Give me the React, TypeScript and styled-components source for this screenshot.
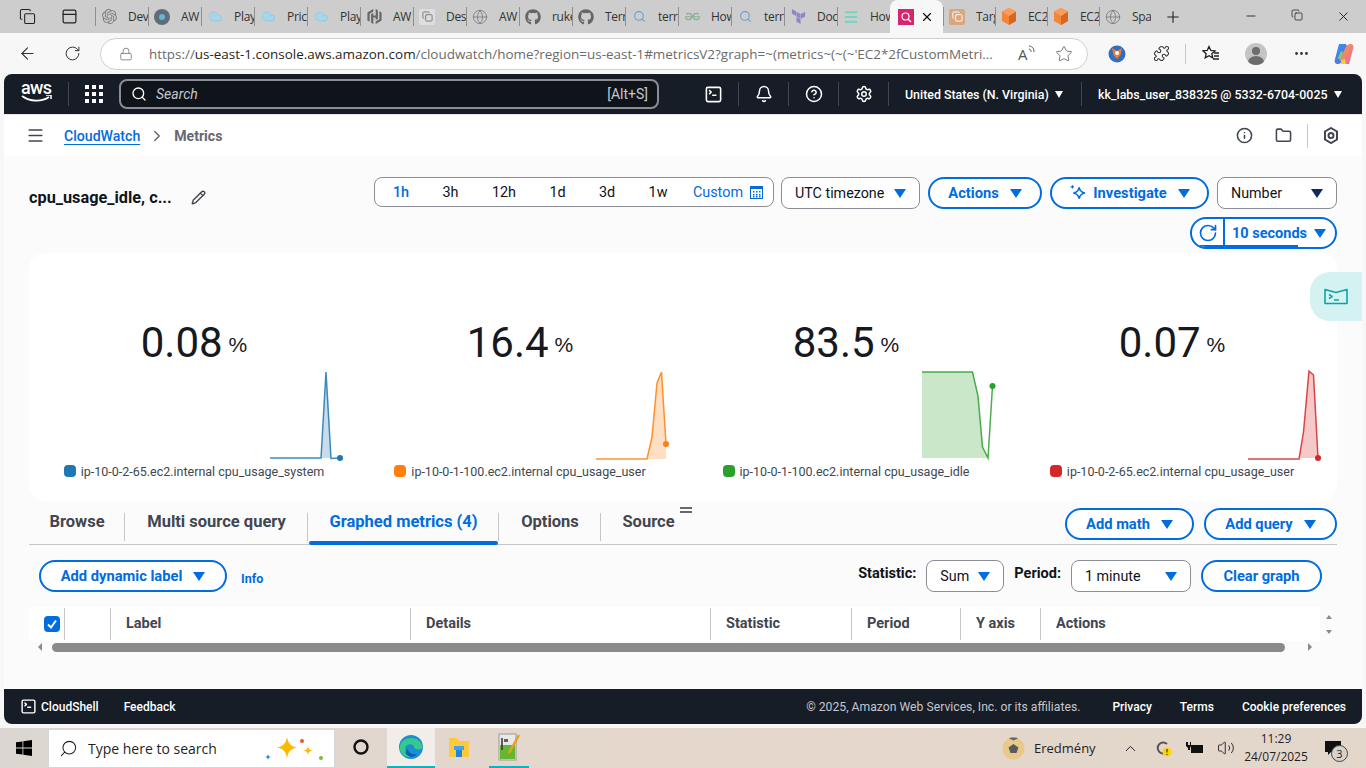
import React from "react";
import styled, { createGlobalStyle } from "styled-components";
import {
  ArrowLeft, Bell, ChevronRight, ChevronUp, CircleHelp, Cloud, Copy, Folder, Globe, Info, Lock, Menu, Minus,
  MoreHorizontal, PanelTop, Pencil, Plus, Puzzle, RotateCw, Search, Settings, SquareTerminal, Star, Volume2, X,
} from "lucide-react";
import { FaGithub } from "react-icons/fa";
import { SiGeeksforgeeks, SiHashicorp, SiOpenai, SiTerraform } from "react-icons/si";

const BLUE = "#006ce0";

const GlobalStyle = createGlobalStyle`
  html, body { margin: 0; padding: 0; background: #f7f7f7; }
  * { box-sizing: border-box; }
  body { font-family: Roboto, "Open Sans", sans-serif; color: #0f141a; }
`;

const Screen = styled.div`
  width: 1366px;
  height: 768px;
  overflow: hidden;
  position: relative;
  display: flex;
  flex-direction: column;
  background: #f7f7f7;
`;

/* browser chrome */
const TabStrip = styled.div`
  height: 33px;
  background: #cdcdcd;
  display: flex;
  align-items: center;
  padding-left: 6px;
  font-family: "Open Sans", sans-serif;
`;
const StripTool = styled.div`
  width: 42px;
  flex: none;
  display: flex;
  justify-content: center;
  color: #222;
`;
const StripGap = styled.div`
  width: 5px;
  flex: none;
`;
const BrowserTab = styled.div<{ $active?: boolean; $narrow?: boolean }>`
  width: ${(p) => (p.$narrow ? 52 : 53)}px;
  height: 33px;
  flex: none;
  display: flex;
  align-items: center;
  gap: ${(p) => (p.$active ? 6 : 11)}px;
  padding-left: ${(p) => (p.$active ? 8 : 6)}px;
  font-size: 12px;
  letter-spacing: -0.3px;
  white-space: nowrap;
  overflow: hidden;
  color: #333;
  position: relative;
  background: ${(p) => (p.$active ? "#f7f7f7" : "transparent")};
  border-radius: ${(p) => (p.$active ? "8px 8px 0 0" : "0")};
  &::before {
    content: "";
    position: absolute;
    left: 0;
    top: 7px;
    bottom: 7px;
    width: 1px;
    background: ${(p) => (p.$active ? "transparent" : "#8f8f8f")};
  }
`;
const TabIconSlot = styled.span<{ $color?: string; $bg?: string }>`
  flex: none;
  width: 16px;
  height: 16px;
  display: flex;
  align-items: center;
  justify-content: center;
  border-radius: 2px;
  color: ${(p) => p.$color || "#7d7d7d"};
  background: ${(p) => p.$bg || "transparent"};
`;
const NewTab = styled.div`
  margin-left: 13px;
  color: #222;
  display: flex;
`;
const WindowButtons = styled.div`
  margin-left: auto;
  display: flex;
  color: #222;
`;
const WindowButton = styled.div`
  width: 46px;
  display: flex;
  justify-content: center;
`;
const AddressRow = styled.div`
  height: 41px;
  display: flex;
  align-items: center;
  padding-left: 17px;
  color: #333;
`;
const RoundTool = styled.div<{ $w?: number }>`
  width: ${(p) => p.$w || 41}px;
  flex: none;
  display: flex;
  justify-content: center;
  align-items: center;
`;
const AddressBar = styled.div`
  width: 988px;
  height: 32px;
  flex: none;
  background: #fff;
  border: 1px solid #d0d0d0;
  border-radius: 16px;
  display: flex;
  align-items: center;
  padding: 0 14px 0 18px;
  font-family: "Open Sans", sans-serif;
  font-size: 13.45px;
  color: #6b6b6b;
`;
const Url = styled.span`
  flex: 1;
  margin-left: 16px;
  white-space: nowrap;
  overflow: hidden;
  b { font-weight: 400; color: #1f1f1f; }
`;
const ReadAloud = styled.span`
  display: flex;
  align-items: flex-start;
  width: 37px;
  font-size: 15px;
  color: #555;
`;
const BarSep = styled.div`
  width: 1px;
  height: 20px;
  flex: none;
  background: #c8c8c8;
`;
const Avatar = styled.div`
  width: 22px;
  height: 22px;
  border-radius: 50%;
  background: #c4c4c4;
  position: relative;
  overflow: hidden;
  &::before {
    content: "";
    position: absolute;
    left: 7px;
    top: 4px;
    width: 8px;
    height: 8px;
    border-radius: 50%;
    background: #6d6d6d;
  }
  &::after {
    content: "";
    position: absolute;
    left: 3px;
    top: 13px;
    width: 16px;
    height: 12px;
    border-radius: 50%;
    background: #6d6d6d;
  }
`;

/* console frame */
const Console = styled.div`
  margin: 0 4px;
  height: 650px;
  flex: none;
  background: #fff;
  border-radius: 8px;
  overflow: hidden;
  display: flex;
  flex-direction: column;
`;
const TopNav = styled.div`
  height: 40px;
  flex: none;
  background: #161d26;
  display: flex;
  align-items: center;
  color: #fff;
  font-size: 12.4px;
  font-weight: 500;
`;
const AwsMark = styled.div`
  width: 64px;
  flex: none;
  padding-left: 17px;
  display: flex;
  flex-direction: column;
  align-items: flex-start;
  line-height: 14px;
  font-size: 18px;
  letter-spacing: -0.6px;
  font-weight: 500;
  height: 27px;
`;
const NavDivider = styled.div`
  width: 1px;
  height: 24px;
  flex: none;
  background: #424650;
`;
const NavSearch = styled.div`
  width: 540px;
  height: 30px;
  flex: none;
  border: 2px solid #8c8c94;
  border-radius: 8px;
  background: #0f141a;
  display: flex;
  align-items: center;
  padding: 0 9px 0 10px;
  color: #c6c6cd;
  font-size: 14px;
  font-weight: 400;
`;
const SearchText = styled.span`
  margin-left: 9px;
  flex: 1;
  font-style: italic;
`;
const NavIcon = styled.div`
  width: 49px;
  flex: none;
  display: flex;
  justify-content: center;
  align-items: center;
`;
const NavMenu = styled.div<{ $w: number }>`
  width: ${(p) => p.$w}px;
  flex: none;
  padding-left: 16px;
  display: flex;
  align-items: center;
  gap: 5px;
  white-space: nowrap;
`;
const NavCaret = styled.span`
  width: 0;
  height: 0;
  margin-left: 1px;
  border-left: 4px solid transparent;
  border-right: 4px solid transparent;
  border-top: 7px solid #fff;
`;

const SubNav = styled.div`
  height: 42px;
  flex: none;
  display: flex;
  align-items: center;
  padding-left: 22px;
  border-top: 1px solid #e8e8e8;
  background: #fff;
  font-size: 14.1px;
`;
const Crumb = styled.a`
  margin-left: 19px;
  color: ${BLUE};
  font-weight: 500;
  text-decoration: underline;
  text-underline-offset: 3px;
`;
const CrumbCurrent = styled.span`
  color: #656871;
  font-weight: 700;
`;
const CrumbChevron = styled.span`
  display: flex;
  margin: 0 8px;
  color: #656871;
`;
const SubTools = styled.div`
  margin-left: auto;
  padding-right: 8px;
  display: flex;
  align-items: center;
  color: #424650;
`;
const SubTool = styled.div<{ $wide?: boolean }>`
  width: ${(p) => (p.$wide ? 46 : 39)}px;
  display: flex;
  justify-content: center;
`;
const SubDivider = styled(NavDivider)`
  margin-left: 4px;
  background: #c6c6cd;
`;

const Page = styled.div`
  flex: 1;
  background: #fbfbfb;
  display: flex;
  flex-direction: column;
  padding: 21px 25px 0;
  min-height: 0;
`;
const Toolbar = styled.div`
  display: flex;
  align-items: flex-start;
  height: 32px;
`;
const Title = styled.div`
  width: 345px;
  height: 32px;
  display: flex;
  align-items: center;
  padding-top: 8px;
  font-size: 16.3px;
  font-weight: 700;
  gap: 19px;
  color: #0f141a;
`;
const RangeGroup = styled.div`
  width: 400px;
  height: 30px;
  border: 1px solid #8c8c94;
  border-radius: 8px;
  background: #fff;
  display: flex;
  align-items: center;
  font-size: 14.4px;
  padding-right: 10px;
  margin-right: 7px;
`;
const RangeItem = styled.span<{ $active?: boolean; $w: number }>`
  width: ${(p) => p.$w}px;
  text-align: center;
  color: ${(p) => (p.$active ? BLUE : "#0f141a")};
  font-weight: ${(p) => (p.$active ? 500 : 400)};
`;
const CustomRange = styled.span`
  margin-left: auto;
  display: flex;
  align-items: center;
  gap: 7px;
  color: ${BLUE};
`;
const Pill = styled.div<{ $w?: number }>`
  width: ${(p) => (p.$w ? `${p.$w}px` : "auto")};
  height: 32px;
  flex: none;
  border: 2px solid ${BLUE};
  border-radius: 16px;
  background: #fff;
  color: ${BLUE};
  font-size: 14.7px;
  font-weight: 700;
  display: flex;
  align-items: center;
  justify-content: center;
  gap: 11px;
  white-space: nowrap;
`;
const Select = styled.div<{ $w: number }>`
  width: ${(p) => p.$w}px;
  height: 32px;
  flex: none;
  border: 1px solid #8c8c94;
  border-radius: 8px;
  background: #fff;
  font-size: 14.3px;
  display: flex;
  align-items: center;
  justify-content: space-between;
  padding: 0 13px;
  white-space: nowrap;
`;
const Caret = styled.span<{ $dark?: boolean }>`
  width: 0;
  height: 0;
  flex: none;
  border-left: 6px solid transparent;
  border-right: 6px solid transparent;
  border-top: 9px solid ${(p) => (p.$dark ? "#0f2a5f" : BLUE)};
`;
const PillGap = styled.div<{ $w: number }>`
  width: ${(p) => p.$w}px;
  flex: none;
`;
const RefreshRow = styled.div`
  display: flex;
  justify-content: flex-end;
  height: 32px;
  margin-top: 8px;
`;
const RefreshPill = styled.div`
  width: 147px;
  height: 32px;
  border: 2px solid ${BLUE};
  border-radius: 16px;
  background: #fff;
  display: flex;
  align-items: center;
  color: ${BLUE};
  font-size: 14.5px;
  font-weight: 700;
  overflow: hidden;
  position: relative;
  &::after {
    content: "";
    position: absolute;
    left: 0;
    bottom: 0;
    width: 106px;
    height: 2px;
    background: ${BLUE};
  }
`;
const RefreshIcon = styled.div`
  width: 33px;
  height: 100%;
  flex: none;
  border-right: 2px solid ${BLUE};
  display: flex;
  align-items: center;
  justify-content: center;
`;
const RefreshLabel = styled.div`
  flex: 1;
  padding: 0 9px 0 7px;
  display: flex;
  align-items: center;
  justify-content: space-between;
`;

const MetricsCard = styled.div`
  margin-top: 4px;
  height: 248px;
  flex: none;
  background: #fff;
  border-radius: 16px;
  display: grid;
  grid-template-columns: repeat(4, 326px);
  padding: 0 2px;
`;
const MetricColumn = styled.div`
  display: flex;
  flex-direction: column;
  align-items: center;
  padding-top: 64px;
`;
const MetricValue = styled.div`
  height: 49px;
  display: flex;
  align-items: baseline;
  gap: 6px;
  font-size: 42px;
  line-height: 51px;
  color: #16191f;
  font-weight: 400;
`;
const MetricUnit = styled.span`
  align-self: center;
  margin-top: 5px;
  font-family: "Liberation Sans", sans-serif;
  font-size: 21px;
  line-height: 1;
`;
const Spark = styled.svg`
  align-self: flex-end;
  margin-right: 11px;
  display: block;
  flex: none;
`;
const Legend = styled.div`
  height: 18px;
  display: flex;
  align-items: center;
  gap: 5px;
  font-size: 12.5px;
  color: #414750;
  white-space: nowrap;
`;
const LegendDot = styled.span<{ $color: string }>`
  width: 12px;
  height: 12px;
  border-radius: 4px;
  background: ${(p) => p.$color};
`;

const TabsBar = styled.div`
  margin-top: 6px;
  height: 38px;
  flex: none;
  display: flex;
  border-bottom: 1px solid #c6c6cd;
  position: relative;
`;
const MetricTab = styled.div<{ $active?: boolean; $w: number }>`
  width: ${(p) => p.$w}px;
  height: 37px;
  flex: none;
  display: flex;
  align-items: center;
  justify-content: center;
  padding-bottom: 8px;
  font-size: 16.5px;
  font-weight: 700;
  color: ${(p) => (p.$active ? BLUE : "#424650")};
  position: relative;
  &::before {
    content: "";
    position: absolute;
    right: 0;
    top: 6px;
    height: 28px;
    width: 1px;
    background: #c6c6cd;
  }
  &::after {
    content: "";
    display: ${(p) => (p.$active ? "block" : "none")};
    position: absolute;
    left: 1px;
    right: 1px;
    bottom: -1px;
    height: 4px;
    border-radius: 2px;
    background: ${BLUE};
  }
`;
const PlainTab = styled(MetricTab)`
  &::before { display: none; }
`;
const ResizeMark = styled.span`
  position: absolute;
  left: 651px;
  top: 0;
  width: 12px;
  height: 6px;
  border-top: 2px solid #656871;
  border-bottom: 2px solid #656871;
`;
const TabActions = styled.div`
  margin-left: auto;
  display: flex;
  gap: 10px;
  padding-top: 1px;
`;
const ControlsRow = styled.div`
  height: 62px;
  flex: none;
  display: flex;
  align-items: flex-start;
  padding: 15px 15px 0 10px;
`;
const InfoLink = styled.span`
  margin: 11px 0 0 14px;
  font-size: 12.5px;
  font-weight: 700;
  color: ${BLUE};
`;
const FieldLabel = styled.span<{ $first?: boolean }>`
  font-size: 14.5px;
  font-weight: 700;
  margin: 5px 10px 0 ${(p) => (p.$first ? "auto" : "10px")};
  color: #0f141a;
`;
const TableWrap = styled.div`
  height: 34px;
  flex: none;
  display: flex;
`;
const MetricsTable = styled.div`
  width: 1291px;
  flex: none;
  height: 34px;
  background: #fff;
  display: grid;
  grid-template-columns: 35px 46px 300px 300px 141px 109px 80px 280px;
  font-size: 14.5px;
  font-weight: 700;
  color: #424650;
`;
const HeadCell = styled.div`
  border-left: 1px solid #c6c6cd;
  margin: 1px 0;
  display: flex;
  align-items: center;
  padding: 0 0 2px 15px;
  &:first-child { border-left: 0; }
`;
const CheckBox = styled.div`
  width: 16px;
  height: 16px;
  margin-top: 2px;
  border-radius: 4px;
  background: ${BLUE};
  display: flex;
  align-items: center;
  justify-content: center;
`;
const VerticalArrows = styled.div`
  width: 18px;
  flex: none;
  display: flex;
  flex-direction: column;
  align-items: center;
  justify-content: center;
  gap: 11px;
`;
const ArrowV = styled.span<{ $up?: boolean }>`
  width: 0;
  height: 0;
  border-left: 3.5px solid transparent;
  border-right: 3.5px solid transparent;
  ${(p) => (p.$up ? "border-bottom" : "border-top")}: 4px solid #8a8a8a;
`;
const HScroll = styled.div`
  height: 14px;
  width: 1291px;
  flex: none;
  display: flex;
  align-items: center;
  padding: 0 9px;
  margin-top: -1px;
`;
const ArrowH = styled.span<{ $left?: boolean }>`
  width: 0;
  height: 0;
  flex: none;
  border-top: 4px solid transparent;
  border-bottom: 4px solid transparent;
  ${(p) => (p.$left ? "border-right" : "border-left")}: 4px solid #8a8a8a;
`;
const HThumb = styled.div`
  width: 1233px;
  height: 9px;
  margin: 0 23px 0 10px;
  border-radius: 5px;
  background: #8a8a8a;
  flex: none;
`;

const Footer = styled.div`
  height: 35px;
  margin-top: auto;
  flex: none;
  background: #161d26;
  color: #fff;
  font-size: 12px;
  font-weight: 500;
  display: flex;
  align-items: center;
  padding: 0 16px;
`;
const FooterShell = styled.span`
  display: flex;
  align-items: center;
  gap: 4px;
  margin-right: 25px;
`;
const FooterRight = styled.div`
  margin-left: auto;
  display: flex;
  gap: 28px;
`;
const Copyright = styled.span`
  color: #c6c6cd;
  font-weight: 400;
  font-size: 12.2px;
  margin-right: 4px;
`;

const ShellTab = styled.div`
  position: absolute;
  right: 4px;
  top: 272px;
  width: 52px;
  height: 49px;
  background: #d5f2f2;
  border-radius: 20px 0 0 20px;
  display: flex;
  align-items: center;
  justify-content: center;
`;

/* windows taskbar */
const Taskbar = styled.div`
  margin-top: 4px;
  height: 40px;
  flex: none;
  background: linear-gradient(90deg, #dcd6d2, #e5d7cb 45%, #e3d6cb);
  display: flex;
  align-items: center;
  font-family: "Open Sans", sans-serif;
  color: #1f1f1f;
`;
const StartButton = styled.div`
  width: 48px;
  display: flex;
  justify-content: center;
`;
const TaskSearch = styled.div`
  width: 287px;
  height: 39px;
  flex: none;
  background: #fff;
  border: 1px solid #d6d6d6;
  display: flex;
  align-items: center;
  padding-left: 10px;
  font-size: 14px;
  position: relative;
`;
const TaskSearchText = styled.span`
  margin-left: 10px;
`;
const TaskSparkles = styled.svg`
  position: absolute;
  left: 214px;
  top: 6px;
`;
const TaskApp = styled.div<{ $w: number; $active?: boolean; $marked?: boolean }>`
  width: ${(p) => p.$w}px;
  height: 40px;
  flex: none;
  display: flex;
  align-items: center;
  justify-content: center;
  background: ${(p) => (p.$active ? "#f2ede9" : "transparent")};
  border-bottom: 2px solid ${(p) => (p.$marked ? "#00b7c3" : "transparent")};
`;
const Tray = styled.div`
  margin-left: auto;
  padding-right: 11px;
  display: flex;
  align-items: center;
  height: 40px;
  font-size: 13px;
`;
const TrayItem = styled.div<{ $w: number }>`
  width: ${(p) => p.$w}px;
  flex: none;
  display: flex;
  justify-content: center;
  align-items: center;
`;
const TrayLabel = styled.span`
  width: 80px;
  flex: none;
`;
const Clock = styled.div`
  width: 70px;
  text-align: center;
  font-size: 12px;
  line-height: 18px;
`;
const Badge = styled.span`
  position: absolute;
  right: -7px;
  bottom: -6px;
  width: 17px;
  height: 17px;
  border-radius: 50%;
  border: 1px solid #444;
  background: #d8d2cc;
  font-size: 11px;
  line-height: 15px;
  text-align: center;
`;
const NoteIcon = styled.div`
  position: relative;
  display: flex;
`;

const Orange = () => (
  <svg width="16" height="17" viewBox="0 0 16 17">
    <path d="M8 0l7 3.5v9.5L8 17l-7-4V3.5z" fill="#f58536" />
    <path d="M8 8l7-4.5v9.5L8 17z" fill="#d9661f" />
    <path d="M8 0l7 3.5L8 8 1 3.5z" fill="#fa9d5a" />
  </svg>
);

const CloudIcon = () => <Cloud size={15} fill="#a6d6ea" strokeWidth={1} />;

const tabs: { label: string; icon: React.ReactNode; color?: string; bg?: string }[] = [
  { label: "Dev", icon: <SiOpenai size={15} /> },
  {
    label: "AW",
    icon: (
      <svg width="16" height="16" viewBox="0 0 16 16">
        <circle cx="8" cy="8" r="8" fill="#5f6d78" />
        <circle cx="8" cy="8" r="3" fill="#6ab3d6" />
      </svg>
    ),
  },
  { label: "Play", icon: <CloudIcon />, color: "#8cc6df" },
  { label: "Pric", icon: <CloudIcon />, color: "#8cc6df" },
  { label: "Play", icon: <CloudIcon />, color: "#8cc6df" },
  { label: "AW", icon: <SiHashicorp size={15} />, color: "#666" },
  { label: "Des", icon: <Copy size={11} />, color: "#777", bg: "#dedede" },
  { label: "AW", icon: <Globe size={16} strokeWidth={1.2} />, color: "#777" },
  { label: "ruke", icon: <FaGithub size={16} />, color: "#666" },
  { label: "Terr", icon: <FaGithub size={16} />, color: "#666" },
  { label: "terr", icon: <Search size={13} />, color: "#6a9fd8" },
  { label: "How", icon: <SiGeeksforgeeks size={15} />, color: "#86b28f" },
  { label: "terr", icon: <Search size={13} />, color: "#6a9fd8" },
  { label: "Doc", icon: <SiTerraform size={15} />, color: "#8d86c9" },
  { label: "How", icon: <Menu size={16} strokeWidth={3} />, color: "#70d6c0" },
];

const afterTabs: { label: string; icon: React.ReactNode; color?: string; bg?: string }[] = [
  { label: "Targ", icon: <Copy size={11} />, color: "#fff", bg: "#d9a77e" },
  { label: "EC2", icon: <Orange /> },
  { label: "EC2", icon: <Orange /> },
  { label: "Spa", icon: <Globe size={16} strokeWidth={1.2} />, color: "#777" },
];

type Metric = {
  value: string;
  color: string;
  legend: string;
  line: [number, number][];
  area: [number, number][];
};

const metrics: Metric[] = [
  {
    value: "0.08",
    color: "#1f77b4",
    legend: "ip-10-0-2-65.ec2.internal cpu_usage_system",
    line: [[0, 92], [51, 92], [56, 6], [61, 92.5], [70, 92]],
    area: [[51, 92], [56, 6], [61, 92]],
  },
  {
    value: "16.4",
    color: "#ff7f0e",
    legend: "ip-10-0-1-100.ec2.internal cpu_usage_user",
    line: [[0, 93], [51, 93], [56, 71], [61, 17], [65.5, 6], [70, 78]],
    area: [[51, 93], [56, 71], [61, 17], [65.5, 6], [70, 78], [70, 93]],
  },
  {
    value: "83.5",
    color: "#2ca02c",
    legend: "ip-10-0-1-100.ec2.internal cpu_usage_idle",
    line: [[0, 6], [50.5, 6], [56, 30], [60.5, 81], [66, 92], [70.5, 20]],
    area: [[0, 6], [50.5, 6], [56, 30], [60.5, 81], [66, 92], [0, 92]],
  },
  {
    value: "0.07",
    color: "#d62728",
    legend: "ip-10-0-2-65.ec2.internal cpu_usage_user",
    line: [[0, 93], [51, 93], [55.5, 66], [61, 5], [65.5, 9], [70, 92]],
    area: [[51, 92], [55.5, 66], [61, 5], [65.5, 9], [70, 92]],
  },
];

const toPoints = (pts: [number, number][]) => pts.map((p) => p.join(",")).join(" ");

const Sparkline = ({ metric }: { metric: Metric }) => {
  const last = metric.line[metric.line.length - 1];
  return (
    <Spark width="76" height="96" viewBox="0 0 76 96">
      <polygon points={toPoints(metric.area)} fill={metric.color} fillOpacity={0.25} />
      <polyline points={toPoints(metric.line)} fill="none" stroke={metric.color} strokeOpacity={0.85} strokeWidth={1.5} />
      <circle cx={last[0]} cy={last[1]} r={3} fill={metric.color} />
    </Spark>
  );
};

const ranges = [
  { label: "1h", w: 52, active: true },
  { label: "3h", w: 47 },
  { label: "12h", w: 60 },
  { label: "1d", w: 47 },
  { label: "3d", w: 52 },
  { label: "1w", w: 50 },
];

export default function App() {
  return (
    <Screen>
      <GlobalStyle />
      <TabStrip>
        <StripTool><Copy size={17} strokeWidth={1.5} /></StripTool>
        <StripTool><PanelTop size={17} strokeWidth={1.7} /></StripTool>
        <StripGap />
        {tabs.map((t, i) => (
          <BrowserTab key={i}>
            <TabIconSlot $color={t.color} $bg={t.bg}>{t.icon}</TabIconSlot>
            {t.label}
          </BrowserTab>
        ))}
        <BrowserTab $active>
          <TabIconSlot>
            <svg width="16" height="16" viewBox="0 0 16 16">
              <rect width="16" height="16" fill="#d6246e" />
              <circle cx="7.5" cy="7.5" r="3.5" fill="none" stroke="#fff" strokeWidth="1.2" />
              <path d="M10 10l3 3" stroke="#fff" strokeWidth="1.2" />
            </svg>
          </TabIconSlot>
          <X size={14} color="#111" />
        </BrowserTab>
        {afterTabs.map((t, i) => (
          <BrowserTab key={i} $narrow>
            <TabIconSlot $color={t.color} $bg={t.bg}>{t.icon}</TabIconSlot>
            {t.label}
          </BrowserTab>
        ))}
        <NewTab><Plus size={18} strokeWidth={1.5} /></NewTab>
        <WindowButtons>
          <WindowButton><Minus size={14} strokeWidth={1.5} /></WindowButton>
          <WindowButton><Copy size={12} strokeWidth={1.5} /></WindowButton>
          <WindowButton><X size={15} strokeWidth={1.5} /></WindowButton>
        </WindowButtons>
      </TabStrip>

      <AddressRow>
        <RoundTool $w={21}><ArrowLeft size={19} strokeWidth={1.4} /></RoundTool>
        <PillGap $w={6} />
        <RoundTool $w={56}><RotateCw size={17} strokeWidth={1.4} /></RoundTool>
        <AddressBar>
          <Lock size={14} strokeWidth={1.3} />
          <Url>https://<b>us-east-1.console.aws.amazon.com</b>/cloudwatch/home?region=us-east-1#metricsV2?graph=~(metrics~(~(~'EC2*2fCustomMetri...</Url>
          <ReadAloud>
            A
            <svg width="9" height="10" viewBox="0 0 9 10" fill="none" stroke="#555">
              <path d="M1 5c2 .5 2 2 2 3M1 2c4 .5 5 3 5 6" />
            </svg>
          </ReadAloud>
          <Star size={18} strokeWidth={1.2} />
        </AddressBar>
        <RoundTool $w={58}>
          <svg width="18" height="18" viewBox="0 0 18 18">
            <circle cx="9" cy="9" r="8.5" fill="#2f6fc2" />
            <path d="M4 3l5 3 5-3-1.5 7-3.5 4-3.5-4z" fill="#ef7c2b" />
            <circle cx="9" cy="8" r="2" fill="#fff" />
          </svg>
        </RoundTool>
        <RoundTool $w={30}><Puzzle size={17} strokeWidth={1.5} /></RoundTool>
        <PillGap $w={9} />
        <BarSep />
        <RoundTool $w={50}>
          <svg width="18" height="17" viewBox="0 0 18 17" fill="none" stroke="#222" strokeWidth="1.3">
            <path d="M7 1.5l1.8 4 4.2.4-3.2 2.8 1 4.2L7 10.7 3.2 12.9l1-4.2L1 5.900l4.200-.4z" />
            <path d="M12 8h5M12 11h5M11 14h6" />
          </svg>
        </RoundTool>
        <RoundTool $w={40}><Avatar /></RoundTool>
        <RoundTool $w={50}><MoreHorizontal size={17} /></RoundTool>
        <RoundTool $w={36}>
          <svg width="24" height="24" viewBox="0 0 24 24">
            <defs>
              <linearGradient id="cpa" x1="0" y1="0" x2="1" y2="1">
                <stop offset="0" stopColor="#1f9cf0" />
                <stop offset="1" stopColor="#7d5be6" />
              </linearGradient>
              <linearGradient id="cpb" x1="0" y1="0" x2="1" y2="1">
                <stop offset="0" stopColor="#f2a63a" />
                <stop offset="1" stopColor="#ef5fa7" />
              </linearGradient>
            </defs>
            <path d="M7 2h7l2 5-5 10c-1 3-3 5-5 5-3 0-4-2-3-5z" fill="url(#cpa)" />
            <path d="M17 22h-7l-2-5 5-10c1-3 3-5 5-5 3 0 4 2 3 5z" fill="url(#cpb)" />
            <path d="M9 18l4-1 1 5H9z" fill="#e8d13a" />
            <path d="M6 16l3-7 2 1-3 8z" fill="#7ed36f" />
          </svg>
        </RoundTool>
      </AddressRow>

      <Console>
        <TopNav>
          <AwsMark>
            aws
            <svg width="31" height="9" viewBox="0 0 31 9">
              <path d="M1 1c8 6 20 6 27 1" fill="none" stroke="#fff" strokeWidth="1.8" />
              <path d="M25 0h5v4" fill="none" stroke="#fff" strokeWidth="1.5" />
            </svg>
          </AwsMark>
          <NavDivider />
          <RoundTool $w={50}>
            <svg width="18" height="18" viewBox="0 0 18 18" fill="#fff">
              {[0, 7, 14].flatMap((y) => [0, 7, 14].map((x) => <rect key={`${x}${y}`} x={x} y={y} width="4" height="4" />))}
            </svg>
          </RoundTool>
          <NavSearch>
            <Search size={16} color="#fff" />
            <SearchText>Search</SearchText>
            <span>[Alt+S]</span>
          </NavSearch>
          <PillGap $w={30} />
          <NavIcon><SquareTerminal size={19} /></NavIcon>
          <NavDivider />
          <NavIcon><Bell size={18} /></NavIcon>
          <NavDivider />
          <NavIcon><CircleHelp size={18} /></NavIcon>
          <NavDivider />
          <NavIcon><Settings size={18} /></NavIcon>
          <NavDivider />
          <NavMenu $w={192}>United States (N. Virginia) <NavCaret /></NavMenu>
          <NavDivider />
          <NavMenu $w={270}>kk_labs_user_838325 @ 5332-6704-0025 <NavCaret /></NavMenu>
        </TopNav>

        <SubNav>
          <Menu size={19} color="#424650" />
          <Crumb>CloudWatch</Crumb>
          <CrumbChevron><ChevronRight size={18} /></CrumbChevron>
          <CrumbCurrent>Metrics</CrumbCurrent>
          <SubTools>
            <SubTool><Info size={17} strokeWidth={2.2} /></SubTool>
            <SubTool><Folder size={17} strokeWidth={2.2} /></SubTool>
            <SubDivider />
            <SubTool $wide>
              <svg width="16" height="17" viewBox="0 0 16 17" fill="none" stroke="#424650" strokeWidth="2">
                <path d="M8 1l6 3.5v8L8 16l-6-3.5v-8z" />
                <circle cx="8" cy="8.5" r="2.5" />
              </svg>
            </SubTool>
          </SubTools>
        </SubNav>

        <Page>
          <Toolbar>
            <Title>cpu_usage_idle, c... <Pencil size={15} color="#424650" strokeWidth={2.2} /></Title>
            <RangeGroup>
              {ranges.map((r) => (
                <RangeItem key={r.label} $w={r.w} $active={r.active}>{r.label}</RangeItem>
              ))}
              <CustomRange>
                Custom
                <svg width="13" height="13" viewBox="0 0 13 13">
                  <rect x=".5" y=".5" width="12" height="12" fill="none" stroke={BLUE} />
                  <rect x="0" y="0" width="13" height="3" fill={BLUE} />
                  {[3, 6, 9].flatMap((x) => [5, 8, 10].map((y) => <rect key={`${x}-${y}`} x={x} y={y} width="1.5" height="1.5" fill={BLUE} />))}
                </svg>
              </CustomRange>
            </RangeGroup>
            <Select $w={139}>UTC timezone <Caret /></Select>
            <PillGap $w={8} />
            <Pill $w={114}>Actions <Caret /></Pill>
            <PillGap $w={8} />
            <Pill $w={159}>
              <svg width="18" height="18" viewBox="0 0 16 16" fill="none" stroke={BLUE} strokeWidth="1.5" style={{ marginRight: -5 }}>
                <path d="M9 3c.6 3 1.5 4.2 5 5-3.5.8-4.4 2-5 5-.6-3-1.5-4.2-5-5 3.5-.8 4.4-2 5-5z" />
                <path d="M3 1v3M1.5 2.5h3" strokeWidth="1" />
              </svg>
              Investigate <Caret />
            </Pill>
            <PillGap $w={8} />
            <Select $w={120}>Number <Caret $dark /></Select>
          </Toolbar>
          <RefreshRow>
            <RefreshPill>
              <RefreshIcon><RotateCw size={20} strokeWidth={2} /></RefreshIcon>
              <RefreshLabel>10 seconds <Caret /></RefreshLabel>
            </RefreshPill>
          </RefreshRow>

          <MetricsCard>
            {metrics.map((m) => (
              <MetricColumn key={m.legend}>
                <MetricValue>{m.value} <MetricUnit>%</MetricUnit></MetricValue>
                <Sparkline metric={m} />
                <Legend><LegendDot $color={m.color} />{m.legend}</Legend>
              </MetricColumn>
            ))}
          </MetricsCard>

          <TabsBar>
            <MetricTab $w={96}>Browse</MetricTab>
            <MetricTab $w={183}>Multi source query</MetricTab>
            <MetricTab $w={191} $active>Graphed metrics (4)</MetricTab>
            <MetricTab $w={102}>Options</MetricTab>
            <PlainTab $w={95}>Source</PlainTab>
            <ResizeMark />
            <TabActions>
              <Pill $w={129}>Add math <Caret /></Pill>
              <Pill $w={133}>Add query <Caret /></Pill>
            </TabActions>
          </TabsBar>

          <ControlsRow>
            <Pill $w={188}>Add dynamic label <Caret /></Pill>
            <InfoLink>Info</InfoLink>
            <FieldLabel $first>Statistic:</FieldLabel>
            <Select $w={78}>Sum <Caret /></Select>
            <FieldLabel>Period:</FieldLabel>
            <Select $w={120}>1 minute <Caret /></Select>
            <PillGap $w={10} />
            <Pill $w={121}>Clear graph</Pill>
          </ControlsRow>

          <TableWrap>
            <MetricsTable>
              <HeadCell><CheckBox>
                <svg width="12" height="12" viewBox="0 0 12 12" fill="none" stroke="#fff" strokeWidth="2">
                  <path d="M2 6.5l3 3 5-7" />
                </svg>
              </CheckBox></HeadCell>
              <HeadCell />
              <HeadCell>Label</HeadCell>
              <HeadCell>Details</HeadCell>
              <HeadCell>Statistic</HeadCell>
              <HeadCell>Period</HeadCell>
              <HeadCell>Y axis</HeadCell>
              <HeadCell>Actions</HeadCell>
            </MetricsTable>
            <VerticalArrows><ArrowV $up /><ArrowV /></VerticalArrows>
          </TableWrap>
          <HScroll>
            <ArrowH $left />
            <HThumb />
            <ArrowH />
          </HScroll>
        </Page>

        <Footer>
          <FooterShell><SquareTerminal size={17} />CloudShell</FooterShell>
          <span>Feedback</span>
          <FooterRight>
            <Copyright>© 2025, Amazon Web Services, Inc. or its affiliates.</Copyright>
            <span>Privacy</span>
            <span>Terms</span>
            <span>Cookie preferences</span>
          </FooterRight>
        </Footer>
      </Console>

      <ShellTab>
        <svg width="24" height="17" viewBox="0 0 24 17" fill="none" stroke="#0aa6a6" strokeWidth="1.6" strokeLinejoin="round">
          <path d="M1 1.500l11 3 11-3v14H1z" />
          <path d="M5 6.500l3 2-3 2M10 12h5" />
        </svg>
      </ShellTab>

      <Taskbar>
        <StartButton>
          <svg width="16" height="16" viewBox="0 0 16 16" fill="#000">
            <path d="M0 2.3l6.5-.9v6.2H0zM7.3 1.3L16 0v7.6H7.3zM0 8.4h6.5v6.2L0 13.7zM7.3 8.4H16V16l-8.700-1.200z" />
          </svg>
        </StartButton>
        <TaskSearch>
          <Search size={19} strokeWidth={1.3} style={{ transform: "scaleX(-1)" }} />
          <TaskSearchText>Type here to search</TaskSearchText>
          <TaskSparkles width="62" height="28" viewBox="0 0 62 28">
            <path d="M24 1c1.5 7 3.5 9 10 10.5-6.5 1.500-8.500 3.500-10 10.500-1.500-7-3.500-9-10-10.500C20.500 10 22.500 8 24 1z" fill="#fcb900" />
            <path d="M45 10c.6 3 1.5 4 4.5 4.5-3 .6-3.900 1.500-4.500 4.500-.6-3-1.500-3.900-4.500-4.500 3-.5 3.900-1.500 4.500-4.500z" fill="#fcb900" />
            <path d="M5 18c.4 2 1 2.600 3 3-2 .4-2.600 1-3 3-.4-2-1-2.600-3-3 2-.4 2.600-1 3-3z" fill="#1c8fe0" />
            <circle cx="39" cy="5" r="2" fill="#e8582b" />
            <circle cx="58" cy="22" r="2" fill="#7cb83a" />
          </TaskSparkles>
        </TaskSearch>
        <TaskApp $w={52}>
          <svg width="18" height="18" viewBox="0 0 18 18" fill="none" stroke="#111" strokeWidth="2.4"><circle cx="9" cy="9" r="6.5" /></svg>
        </TaskApp>
        <TaskApp $w={48} $active $marked>
          <svg width="26" height="26" viewBox="0 0 26 26">
            <circle cx="13" cy="13" r="12" fill="#1b8fd6" />
            <path d="M2 12C4 2 22 0 25 14c-3 2-8 2-9-1 0-3-5-4-8-1-2 3 0 8 5 11C6 24 1 19 2 12z" fill="#37c98b" />
            <path d="M10 15c0 4 5 6 9 5-2 3-8 4-11 0-1-2 1-5 2-5z" fill="#0b5cb3" />
          </svg>
        </TaskApp>
        <TaskApp $w={48}>
          <svg width="24" height="24" viewBox="0 0 24 24">
            <path d="M2 3h8l2 3h10v16H2z" fill="#ffc83d" />
            <rect x="9" y="15" width="6" height="7" fill="#1e88d8" />
            <rect x="7" y="11" width="10" height="4" fill="#3da5e8" />
          </svg>
        </TaskApp>
        <PillGap $w={6} />
        <TaskApp $w={40} $marked>
          <svg width="24" height="28" viewBox="0 0 24 28">
            <rect x="2" y="1" width="17" height="26" fill="#e8e8e8" stroke="#999" />
            <rect x="3" y="12" width="15" height="14" fill="#64b82f" />
            <path d="M5 5v12M8 6v3M10 6v3" stroke="#333" strokeWidth="1.5" />
            <path d="M22 2L12 20" stroke="#e8a020" strokeWidth="2.5" />
          </svg>
        </TaskApp>
        <Tray>
          <TrayItem $w={42}>
            <svg width="23" height="23" viewBox="0 0 23 23">
              <circle cx="11.5" cy="11.5" r="11" fill="#e9c98a" />
              <path d="M11.5 7l5 3.5-2 5.5h-6l-2-5.5z" fill="#5a5a5a" />
              <path d="M7 1.500l4.500 2 4.500-2-2-1h-5z" fill="#666" />
            </svg>
          </TrayItem>
          <TrayLabel>Eredmény</TrayLabel>
          <TrayItem $w={32}><ChevronUp size={17} strokeWidth={1.4} /></TrayItem>
          <TrayItem $w={33}>
            <svg width="18" height="18" viewBox="0 0 18 18">
              <path d="M13 5a5.5 5.5 0 1 0 0 8" fill="none" stroke="#555" strokeWidth="2" />
              <circle cx="13" cy="13" r="4.5" fill="#ffd500" />
              <path d="M13 10v3.5M13 15v1" stroke="#111" />
            </svg>
          </TrayItem>
          <TrayItem $w={32}>
            <svg width="18" height="14" viewBox="0 0 18 14" fill="#111">
              <rect x="5" y="4" width="12" height="8" />
              <path d="M0 1h2v3h2V1h1v4l-1 2v2H2V7L0 5z" />
            </svg>
          </TrayItem>
          <TrayItem $w={30}><Volume2 size={18} strokeWidth={1.2} /></TrayItem>
          <Clock>11:29<br />24/07/2025</Clock>
          <TrayItem $w={44}>
            <NoteIcon>
              <svg width="16" height="15" viewBox="0 0 16 15" fill="#111">
                <path d="M0 0h16v11H6l-3 3v-3H0z" />
              </svg>
              <Badge>3</Badge>
            </NoteIcon>
          </TrayItem>
        </Tray>
      </Taskbar>
    </Screen>
  );
}
